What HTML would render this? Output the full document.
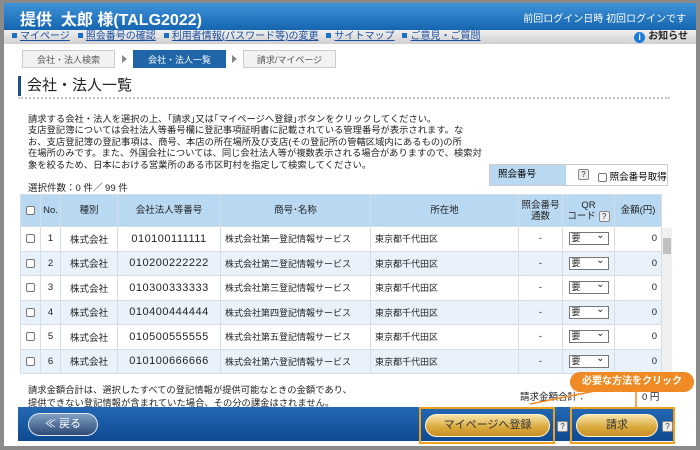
<!DOCTYPE html>
<html><head><meta charset="utf-8"><style>
*{box-sizing:border-box;margin:0;padding:0}
body{width:700px;height:450px;overflow:hidden;background:#8a8a8a;font-family:"Liberation Sans","Noto Sans CJK JP",sans-serif;position:relative}
.frame{position:absolute;left:4px;top:3px;width:692px;height:443px;background:#fff}
.hd{position:absolute;left:0;top:0;width:692px;height:27px;background:linear-gradient(#3f93d8,#1565b0);color:#fff}
.hd .t{position:absolute;left:16px;top:3px;font-size:16px;font-weight:bold}
.hd .r{position:absolute;right:10px;top:7px;font-size:10px}
.nav{position:absolute;left:0;top:27px;width:692px;height:14px;background:linear-gradient(#f0f0f0,#cfcfcf);font-size:10px;line-height:14px}
.nav a{color:#1a4fa0;text-decoration:underline;margin-left:8px}
.nav a:before{content:"";display:inline-block;width:5px;height:5px;background:#1a6fc8;margin-right:3px;vertical-align:1px}
.nav .inf{position:absolute;right:8px;top:0;font-weight:bold;color:#222}
.nav .inf i{display:inline-block;width:11px;height:11px;border-radius:50%;background:#1d7bd8;color:#fff;font-size:9px;text-align:center;line-height:11px;font-style:normal;vertical-align:-1px;margin-right:3px}
.bc{position:absolute;top:50px;height:18px;width:93px;font-size:9px;text-align:center;line-height:18px;border:1px solid #ccc;background:#f2f2f2;color:#555}
.arr{position:absolute;top:55px;width:0;height:0;border-left:5px solid #888;border-top:4px solid transparent;border-bottom:4px solid transparent}
.ttl{position:absolute;left:18px;top:76px;height:20px;border-left:3px solid #1e4f8c;padding-left:6px;font-size:15px;color:#222;line-height:20px}
.dl{position:absolute;left:18px;top:97px;width:652px;border-top:2px dotted #bcc4d4}
.p{position:absolute;left:28px;top:114px;font-size:9.3px;line-height:11.4px;color:#222;width:470px}
.sel{position:absolute;left:28px;top:180px;font-size:9.5px;color:#222}
.qb{position:absolute;left:489px;top:164px;width:179px;height:22px;border:1px solid #ccc;font-size:9.5px}
.qb .a{position:absolute;left:0;top:0;width:76px;height:20px;background:#b9d9f2;line-height:20px;padding-left:8px}
.q{display:inline-block;width:11px;height:11px;border:1px solid #888;background:#eee;font-size:8px;line-height:9px;text-align:center;color:#333;border-radius:2px}
.cb{display:inline-block;width:9px;height:9px;border:1px solid #777;background:#fff;border-radius:2px;vertical-align:middle}
table{position:absolute;left:20px;top:194px;width:642px;border-collapse:collapse;font-size:9.5px;color:#222}
td,th{border:1px solid #d5dde6;font-weight:normal;height:24.5px;text-align:center;white-space:nowrap}
th{background:#b9d9f2;height:32px;line-height:11px}
tr.o td{background:#fff}
tr.e td{background:#e9f2fa}
td.n{font-size:11px;letter-spacing:.5px}
td.s{text-align:left;padding-left:4px;font-size:9px}
.sl{display:inline-block;width:40px;height:13px;border:1px solid #777;background:#fff;font-size:9px;line-height:11px;text-align:left;padding-left:2px;position:relative}
.sl:after{content:"⌄";position:absolute;right:3px;top:-3px;font-size:10px}
.sb{position:absolute;left:662px;top:228px;width:10px;height:148px;background:#f0f0f0}
.sb i{position:absolute;left:1px;top:10px;width:8px;height:16px;background:#c1c1c1}
.bt{position:absolute;left:28px;top:384px;font-size:9.3px;line-height:13px;color:#222}
.tot{position:absolute;left:520px;top:389px;font-size:9.5px;color:#222}
.tot2{position:absolute;left:642px;top:389px;font-size:9.5px;color:#222}
.ft{position:absolute;left:18px;top:407px;width:656px;height:34px;background:linear-gradient(#2368b4,#0f4a92)}
.btn{position:absolute;height:23px;border-radius:12px;font-size:11px;text-align:center;line-height:21px}
.back{left:28px;top:413px;width:70px;background:linear-gradient(#7fa0c4,#2e4a74);border:1px solid #dfe7f0;color:#fff}
.gold{background:linear-gradient(#f6e3a8,#d9a83a 60%,#c8902a);border:1px solid #fff5d0;color:#333}
.ob{position:absolute;border:2px solid #f0a020}
.call{position:absolute;left:570px;top:372px;width:124px;height:20px;border-radius:10px;background:#f08a24;color:#fff;font-size:10px;font-weight:bold;text-align:center;line-height:20px}
</style></head><body>
<div class="frame">
<div class="hd"><div class="t">提供&nbsp; 太郎 様(TALG2022)</div><div class="r">前回ログイン日時 初回ログインです</div></div>
<div class="nav"><a>マイページ</a><a>照会番号の確認</a><a>利用者情報(パスワード等)の変更</a><a>サイトマップ</a><a>ご意見・ご質問</a><span class="inf"><i>i</i>お知らせ</span></div>
</div>
<div class="bc" style="left:22px">会社・法人検索</div>
<div class="arr" style="left:122px"></div>
<div class="bc" style="left:133px;background:#1f65a8;color:#fff;border-color:#1f65a8">会社・法人一覧</div>
<div class="arr" style="left:232px"></div>
<div class="bc" style="left:243px">請求/マイページ</div>
<div class="ttl">会社・法人一覧</div>
<div class="dl"></div>
<div class="p">請求する会社・法人を選択の上、｢請求｣又は｢マイページへ登録｣ボタンをクリックしてください。<br>支店登記簿については会社法人等番号欄に登記事項証明書に記載されている管理番号が表示されます。な<br>お、支店登記簿の登記事項は、商号、本店の所在場所及び支店(その登記所の管轄区域内にあるもの)の所<br>在場所のみです。また、外国会社については、同じ会社法人等が複数表示される場合がありますので、検索対<br>象を絞るため、日本における営業所のある市区町村を指定して検索してください。</div>
<div class="sel">選択件数：0 件／ 99 件</div>
<div class="qb"><div class="a">照会番号</div><span class="q" style="position:absolute;left:88px;top:4px">?</span><span style="position:absolute;left:108px;top:4px"><span class="cb"></span> 照会番号取得</span></div>
<table>
<tr><th style="width:20px"><span class="cb"></span></th><th style="width:20px">No.</th><th style="width:57px">種別</th><th style="width:103px">会社法人等番号</th><th style="width:150px">商号･名称</th><th style="width:148px">所在地</th><th style="width:44px">照会番号<br>通数</th><th style="width:52px">QR<br>コード <span class="q">?</span></th><th>金額(円)</th></tr>
<tr class="o"><td><span class="cb"></span></td><td>1</td><td>株式会社</td><td class="n">010100111111</td><td class="s">株式会社第一登記情報サービス</td><td class="s">東京都千代田区</td><td>-</td><td><span class="sl">要</span></td><td style="text-align:right;padding-right:4px">0</td></tr>
<tr class="e"><td><span class="cb"></span></td><td>2</td><td>株式会社</td><td class="n">010200222222</td><td class="s">株式会社第二登記情報サービス</td><td class="s">東京都千代田区</td><td>-</td><td><span class="sl">要</span></td><td style="text-align:right;padding-right:4px">0</td></tr>
<tr class="o"><td><span class="cb"></span></td><td>3</td><td>株式会社</td><td class="n">010300333333</td><td class="s">株式会社第三登記情報サービス</td><td class="s">東京都千代田区</td><td>-</td><td><span class="sl">要</span></td><td style="text-align:right;padding-right:4px">0</td></tr>
<tr class="e"><td><span class="cb"></span></td><td>4</td><td>株式会社</td><td class="n">010400444444</td><td class="s">株式会社第四登記情報サービス</td><td class="s">東京都千代田区</td><td>-</td><td><span class="sl">要</span></td><td style="text-align:right;padding-right:4px">0</td></tr>
<tr class="o"><td><span class="cb"></span></td><td>5</td><td>株式会社</td><td class="n">010500555555</td><td class="s">株式会社第五登記情報サービス</td><td class="s">東京都千代田区</td><td>-</td><td><span class="sl">要</span></td><td style="text-align:right;padding-right:4px">0</td></tr>
<tr class="e"><td><span class="cb"></span></td><td>6</td><td>株式会社</td><td class="n">010100666666</td><td class="s">株式会社第六登記情報サービス</td><td class="s">東京都千代田区</td><td>-</td><td><span class="sl">要</span></td><td style="text-align:right;padding-right:4px">0</td></tr>
</table>
<div class="sb"><i></i></div>
<div class="bt">請求金額合計は、選択したすべての登記情報が提供可能なときの金額であり、<br>提供できない登記情報が含まれていた場合、その分の課金はされません。</div>
<div class="tot">請求金額合計：</div><div class="tot2">0 円</div>
<div class="ft"></div>
<div class="btn back">≪ 戻る</div>
<div class="ob" style="left:419px;top:407px;width:136px;height:37px"></div>
<div class="btn gold" style="left:425px;top:414px;width:125px">マイページへ登録</div>
<span class="q" style="position:absolute;left:557px;top:421px">?</span>
<div class="ob" style="left:570px;top:407px;width:105px;height:37px"></div>
<div class="btn gold" style="left:576px;top:414px;width:82px">請求</div>
<span class="q" style="position:absolute;left:662px;top:421px">?</span>
<svg style="position:absolute;left:0;top:0" width="700" height="450"><path d="M600 390 L530 404 M636 392 L636 407" stroke="#f08a24" stroke-width="1.5" fill="none"/></svg>
<div class="call">必要な方法をクリック</div>
</body></html>
